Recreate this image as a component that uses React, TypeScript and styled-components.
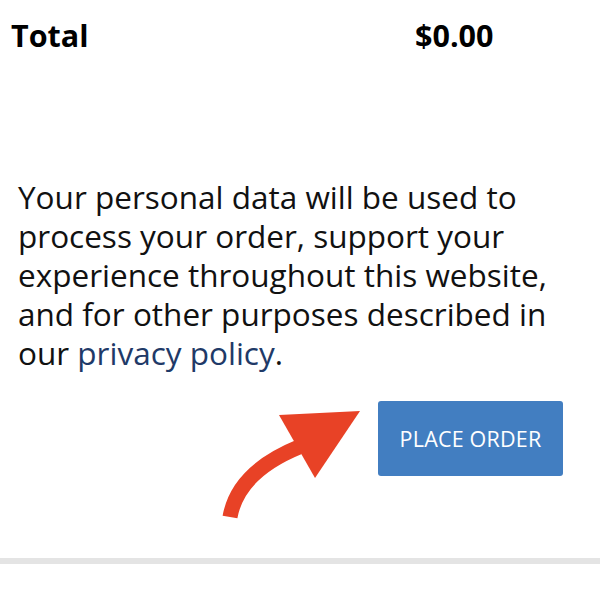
import React from 'react'
import styled, { createGlobalStyle } from 'styled-components'

const GlobalStyle = createGlobalStyle`
  html, body {
    margin: 0;
    padding: 0;
    background: #fff;
  }
  body {
    font-family: "Open Sans", "DejaVu Sans", sans-serif;
    color: #111;
  }
`

const Page = styled.main`
  width: 600px;
  height: 600px;
  overflow: hidden;
  background: #fff;
`

const TotalRow = styled.div`
  display: grid;
  grid-template-columns: 404px auto;
  padding: 14px 11px 0;
  font-size: 30.5px;
  font-weight: 700;
  line-height: 42px;
  color: #000;
`

const Notice = styled.p`
  margin: 121px 0 0;
  padding: 0 18px;
  font-size: 31.5px;
  line-height: 39px;
  color: #111;

  a {
    color: #1f3a68;
    text-decoration: none;
  }
`

const Actions = styled.div`
  position: relative;
  display: flex;
  justify-content: flex-end;
  padding: 29px 37px 0 0;
`

const PlaceOrder = styled.button`
  width: 185px;
  height: 75px;
  border: 0;
  border-radius: 3px;
  background: #427ec1;
  color: #fff;
  font-family: "Open Sans", "DejaVu Sans", sans-serif;
  font-size: 21.5px;
  letter-spacing: 0.2px;
  cursor: pointer;
`

// annotation arrow drawn over the page
const Pointer = styled.svg`
  position: absolute;
  left: 210px;
  top: 30px;
  width: 160px;
  height: 130px;
  overflow: visible;
`

const Divider = styled.hr`
  margin: 82px 0 0;
  border: 0;
  height: 6px;
  background: #e4e4e4;
`

const Arrow = () => (
  <Pointer viewBox="210 430 160 130">
    <path
      d="M230 545 Q238 500 299 475"
      fill="none"
      stroke="#e84226"
      strokeWidth={15}
    />
    <polygon points="279,443 360,439 315,506" fill="#e84226" />
  </Pointer>
)

export default function App() {
  return (
    <Page>
      <GlobalStyle />
      <TotalRow>
        <span>Total</span>
        <span>$0.00</span>
      </TotalRow>

      <Notice>
        Your personal data will be used to process your order, support your
        experience throughout this website, and for other purposes described in
        our <a href="#privacy">privacy policy</a>.
      </Notice>

      <Actions>
        <Arrow />
        <PlaceOrder>PLACE ORDER</PlaceOrder>
      </Actions>

      <Divider />
    </Page>
  )
}
